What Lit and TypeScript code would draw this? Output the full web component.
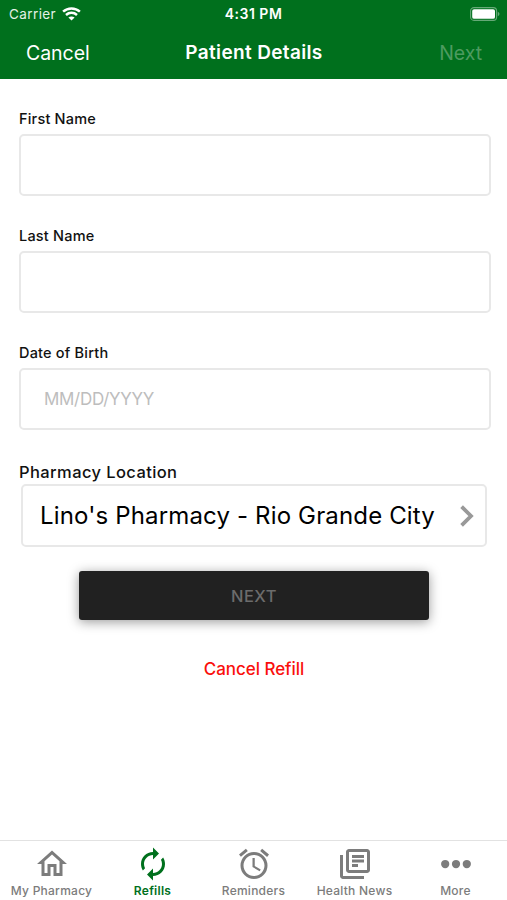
import { LitElement, html, svg, css } from "lit";
import { customElement, property } from "lit/decorators.js";
import { classMap } from "lit/directives/class-map.js";

const FONT = css`Inter, "Liberation Sans", sans-serif`;

@customElement("status-bar")
class StatusBar extends LitElement {
  static styles = css`
    :host { display: grid; grid-template-columns: 1fr auto 1fr; align-items: center; height: 27px; padding: 0 7px 0 9px; color: #fff; font-family: ${FONT}; }
    .carrier { display: flex; align-items: center; gap: 6px; font-size: 13.5px; letter-spacing: 0.4px; color: #e4f2e6; }
    .time { font-size: 14px; font-weight: 600; letter-spacing: 0.5px; margin-right: 2px; }
    .battery { justify-self: end; }
    svg { display: block; }
  `;
  render() {
    return html`
      <div class="carrier"><span>Carrier</span>
        <svg width="19" height="14" viewBox="0 0 19 14" fill="none" stroke="#fff" stroke-width="2.5">
          <path d="M1.1 4.7C5.9.3 13.1.3 17.9 4.7" />
          <path d="M4 8c3.2-2.9 7.8-2.9 11 0" />
          <path d="M6.4 10.5c1.7-1.5 4.5-1.5 6.2 0L9.5 13.6z" fill="#fff" stroke="none" />
        </svg>
      </div>
      <div class="time">4:31 PM</div>
      <svg class="battery" width="30" height="14" viewBox="0 0 30 14">
        <rect x=".6" y=".6" width="26" height="12.8" rx="3.4" fill="none" stroke="#fff" stroke-opacity=".4" stroke-width="1.1" />
        <rect x="2.2" y="2.2" width="22.8" height="9.6" rx="1.9" fill="#fff" />
        <path d="M27.8 4.8c2.2.8 2.2 3.6 0 4.4z" fill="#fff" fill-opacity=".4" />
      </svg>`;
  }
}

@customElement("nav-bar")
class NavBar extends LitElement {
  static styles = css`
    :host { display: grid; grid-template-columns: 1fr auto 1fr; align-items: center; height: 52px; padding: 0 25px 0 26px; color: #fff; font-family: ${FONT}; line-height: 24px; }
    .action { font-size: 19.5px; letter-spacing: -0.05px; }
    .title { font-size: 19px; font-weight: 600; letter-spacing: 0.35px; }
    .next { justify-self: end; color: #4d9b60; }
  `;
  render() {
    return html`<span class="action">Cancel</span><span class="title">Patient Details</span><span class="action next">Next</span>`;
  }
}

@customElement("text-field")
class TextField extends LitElement {
  @property() label = "";
  @property() placeholder = "";
  static styles = css`
    :host { display: block; height: 117px; font-family: ${FONT}; }
    .label { height: 26px; line-height: 20px; box-sizing: border-box; padding-top: 1px; font-size: 14.5px; font-weight: 500; letter-spacing: 0.2px; color: #111; }
    .box { box-sizing: border-box; height: 62px; border: 2px solid #e8e8e8; border-radius: 5px; padding: 0 23px; display: flex; align-items: center; font-size: 17px; letter-spacing: -0.3px; color: #bdbdbd; }
  `;
  render() {
    return html`<div class="label">${this.label}</div><div class="box">${this.placeholder}</div>`;
  }
}

const ICONS: Record<string, unknown> = {
  home: svg`<path d="M12 5.69l5 4.5V18h-2v-6H9v6H7v-7.81l5-4.5M12 3L2 12h3v8h6v-6h2v6h6v-8h3L12 3z"/>`,
  refill: svg`<path d="M12 6v3l4-4-4-4v3c-4.42 0-8 3.58-8 8 0 1.57.46 3.03 1.24 4.26L6.7 14.8A5.87 5.87 0 0 1 6 12c0-3.31 2.69-6 6-6zm6.76 1.74L17.3 9.2c.44.84.7 1.79.7 2.8 0 3.31-2.69 6-6 6v-3l-4 4 4 4v-3c4.42 0 8-3.58 8-8 0-1.57-.46-3.03-1.24-4.26z"/>`,
  alarm: svg`<path d="M22 5.72l-4.6-3.86-1.29 1.53 4.6 3.86L22 5.72zM7.88 3.39L6.6 1.86 2 5.71l1.29 1.53 4.59-3.85zM12.5 8H11v6l4.75 2.85.75-1.23-4-2.37V8zM12 4a9 9 0 1 0 0 18 9 9 0 0 0 0-18zm0 16c-3.87 0-7-3.13-7-7s3.13-7 7-7 7 3.13 7 7-3.13 7-7 7z"/>`,
  news: svg`<path d="M4 6H2v14c0 1.1.9 2 2 2h14v-2H4V6zm16-4H8c-1.1 0-2 .9-2 2v12c0 1.1.9 2 2 2h12c1.1 0 2-.9 2-2V4c0-1.1-.9-2-2-2zm0 14H8V4h12v12zM10 9h8v2h-8zm0 3h4v2h-4zm0-6h8v2h-8z"/>`,
  more: svg`<circle cx="4.8" cy="12" r="2.75"/><circle cx="12" cy="12" r="2.75"/><circle cx="19.2" cy="12" r="2.75"/>`,
};

const TABS = [
  { icon: "home", label: "My Pharmacy", active: false },
  { icon: "refill", label: "Refills", active: true },
  { icon: "alarm", label: "Reminders", active: false },
  { icon: "news", label: "Health News", active: false },
  { icon: "more", label: "More", active: false },
];

@customElement("tab-bar")
class TabBar extends LitElement {
  static styles = css`
    :host { display: grid; grid-template-columns: repeat(5, 101px); padding-left: 1px; height: 60px; box-sizing: border-box; border-top: 1px solid #e2e2e2; background: #fff; font-family: ${FONT}; }
    .tab { display: flex; flex-direction: column; align-items: center; padding-top: 4.5px; color: #7c7c7c; white-space: nowrap; }
    .tab.active { color: #00701d; }
    .icon { display: block; width: 36px; height: 36px; fill: currentColor; }
    .text { font-size: 12px; line-height: 16px; margin-top: 1.5px; font-weight: 500; letter-spacing: 0.25px; }
    .active .text { font-weight: 600; }
  `;
  render() {
    return TABS.map((t) => html`
      <div class=${classMap({ tab: true, active: t.active })}>
        <svg class="icon" viewBox="0 0 24 24">${ICONS[t.icon]}</svg>
        <span class="text">${t.label}</span>
      </div>`);
  }
}

@customElement("app-root")
class AppRoot extends LitElement {
  static styles = css`
    :host { display: flex; flex-direction: column; height: 900px; width: 100%; overflow: hidden; background: #fff; font-family: ${FONT}; color: #111; }
    header { background: #00701d; flex: none; }
    main { flex: 1; padding: 29px 16px 0 19px; display: flex; flex-direction: column; }
    .location-label { margin-top: 3px; height: 22px; line-height: 20px; font-size: 16.5px; font-weight: 500; letter-spacing: 0.4px; }
    .location { box-sizing: border-box; height: 63px; margin: 0 4px 0 2px; border: 2px solid #e8e8e8; border-radius: 5px; padding: 0 11px 0 17px; display: flex; align-items: center; justify-content: space-between; font-size: 24px; letter-spacing: 0.15px; white-space: nowrap; color: #000; }
    .next { margin: 24px 62px 0 60px; height: 49px; border-radius: 3px; background: #212121; color: #6c6c6c; display: flex; align-items: center; justify-content: center; font-size: 16.5px; letter-spacing: 0.5px; font-weight: 500; box-shadow: 0 2px 12px rgba(0, 0, 0, 0.4); }
    .cancel { margin: 38px 2px 0 0; line-height: 22px; align-self: center; font-size: 17px; font-weight: 500; letter-spacing: -0.05px; color: #fa0f0c; }
  `;
  render() {
    return html`
      <header><status-bar></status-bar><nav-bar></nav-bar></header>
      <main>
        <text-field label="First Name"></text-field>
        <text-field label="Last Name"></text-field>
        <text-field label="Date of Birth" placeholder="MM/DD/YYYY"></text-field>
        <div class="location-label">Pharmacy Location</div>
        <div class="location">
          <span>Lino's Pharmacy - Rio Grande City</span>
          <svg width="14" height="22" viewBox="0 0 14 22" fill="none" stroke="#999" stroke-width="3.8"><path d="M1.6 1.7l9.4 9.3-9.4 9.3"/></svg>
        </div>
        <div class="next">NEXT</div>
        <div class="cancel">Cancel Refill</div>
      </main>
      <tab-bar></tab-bar>`;
  }
}
